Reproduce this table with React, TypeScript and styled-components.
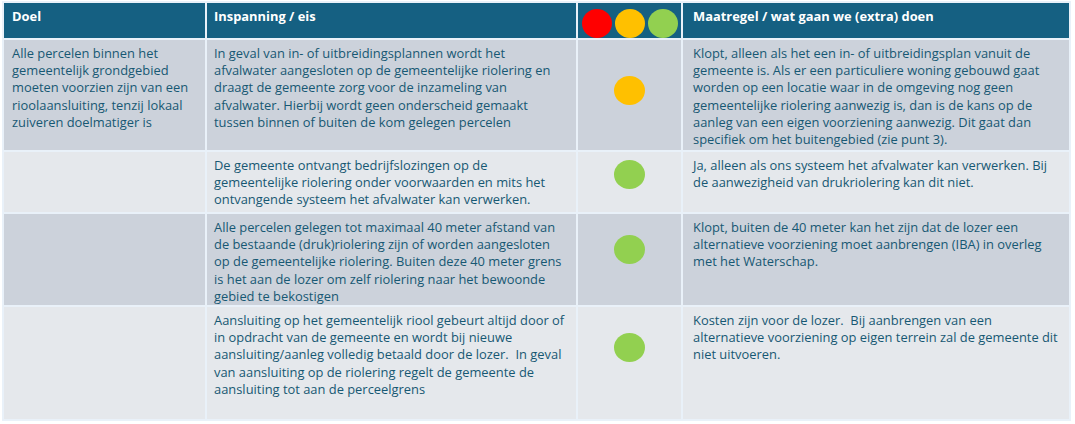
import styled, { createGlobalStyle } from 'styled-components';

const GlobalStyle = createGlobalStyle`
    body {
        margin: 0;
        background: #ffffff;
        font-family: "Open Sans", "Liberation Sans", sans-serif;
    }
`;

const Table = styled.div`
    display: grid;
    grid-template-columns: 201px 369px 103px 386px;
    grid-template-rows: 35px 110px 60px 91px 112px;
    gap: 2px;
    padding: 2px;
    margin: 1px 0 0 2px;
    width: max-content;
    background: #e9f1f9;
`;

const HeadCell = styled.div<{ $pad?: number }>`
    background: #156082;
    color: #ffffff;
    font-weight: 700;
    font-size: 12.9px;
    line-height: 17px;
    padding: 5px ${(p) => p.$pad ?? 8}px 0;
    white-space: nowrap;
`;

const Lights = styled.div`
    background: #156082;
    display: flex;
    justify-content: center;
    gap: 3px;
    padding-top: 6px;
    padding-left: 1px;
`;

const Light = styled.span<{ $color: string }>`
    width: 30px;
    height: 29px;
    border-radius: 50%;
    background: ${(p) => p.$color};
`;

const Cell = styled.div<{ $shade: boolean; $pad?: number }>`
    background: ${(p) => (p.$shade ? '#ccd2db' : '#e5e8ec')};
    color: #175873;
    font-size: 12.9px;
    line-height: 17.2px;
    padding: 5px ${(p) => p.$pad ?? 8}px 0;
    white-space: nowrap;
`;

const DotCell = styled.div<{ $shade: boolean; $top: number }>`
    background: ${(p) => (p.$shade ? '#ccd2db' : '#e5e8ec')};
    display: flex;
    justify-content: center;
    align-items: flex-start;
    padding-top: ${(p) => p.$top}px;
`;

const Dot = styled.span<{ $color: string }>`
    width: 31px;
    height: 29px;
    border-radius: 50%;
    background: ${(p) => p.$color};
`;

const AMBER = '#ffc000';
const GREEN = '#92d050';

type Row = {
    doel: string[];
    eis: string[];
    dot: string;
    top: number;
    maatregel: string[];
};

const rows: Row[] = [
    {
        doel: [
            'Alle percelen binnen het',
            'gemeentelijk grondgebied',
            'moeten voorzien zijn van een',
            'rioolaansluiting, tenzij lokaal',
            'zuiveren doelmatiger is',
        ],
        eis: [
            'In geval van in- of uitbreidingsplannen wordt het',
            'afvalwater aangesloten op de gemeentelijke riolering en',
            'draagt de gemeente zorg voor de inzameling van',
            'afvalwater. Hierbij wordt geen onderscheid gemaakt',
            'tussen binnen of buiten de kom gelegen percelen',
        ],
        dot: AMBER,
        top: 36,
        maatregel: [
            'Klopt, alleen als het een in- of uitbreidingsplan vanuit de',
            'gemeente is. Als er een particuliere woning gebouwd gaat',
            'worden op een locatie waar in de omgeving nog geen',
            'gemeentelijke riolering aanwezig is, dan is de kans op de',
            'aanleg van een eigen voorziening aanwezig. Dit gaat dan',
            'specifiek om het buitengebied (zie punt 3).',
        ],
    },
    {
        doel: [],
        eis: [
            'De gemeente ontvangt bedrijfslozingen op de',
            'gemeentelijke riolering onder voorwaarden en mits het',
            'ontvangende systeem het afvalwater kan verwerken.',
        ],
        dot: GREEN,
        top: 8,
        maatregel: [
            'Ja, alleen als ons systeem het afvalwater kan verwerken. Bij',
            'de aanwezigheid van drukriolering kan dit niet.',
        ],
    },
    {
        doel: [],
        eis: [
            'Alle percelen gelegen tot maximaal 40 meter afstand van',
            'de bestaande (druk)riolering zijn of worden aangesloten',
            'op de gemeentelijke riolering. Buiten deze 40 meter grens',
            'is het aan de lozer om zelf riolering naar het bewoonde',
            'gebied te bekostigen',
        ],
        dot: GREEN,
        top: 21,
        maatregel: [
            'Klopt, buiten de 40 meter kan het zijn dat de lozer een',
            'alternatieve voorziening moet aanbrengen (IBA) in overleg',
            'met het Waterschap.',
        ],
    },
    {
        doel: [],
        eis: [
            'Aansluiting op het gemeentelijk riool gebeurt altijd door of',
            'in opdracht van de gemeente en wordt bij nieuwe',
            'aansluiting/aanleg volledig betaald door de lozer.\u00a0 In geval',
            'van aansluiting op de riolering regelt de gemeente de',
            'aansluiting tot aan de perceelgrens',
        ],
        dot: GREEN,
        top: 26,
        maatregel: [
            'Kosten zijn voor de lozer.\u00a0 Bij aanbrengen van een',
            'alternatieve voorziening op eigen terrein zal de gemeente dit',
            'niet uitvoeren.',
        ],
    },
];

const Lines = ({ lines }: { lines: string[] }) => (
    <>
        {lines.map((l, i) => (
            <div key={i}>{l}</div>
        ))}
    </>
);

export default function App() {
    return (
        <>
            <GlobalStyle />
            <Table>
                <HeadCell>Doel</HeadCell>
                <HeadCell $pad={7}>Inspanning / eis</HeadCell>
                <Lights>
                    <Light $color="#ff0000" />
                    <Light $color={AMBER} />
                    <Light $color={GREEN} />
                </Lights>
                <HeadCell $pad={10}>Maatregel / wat gaan we (extra) doen</HeadCell>
                {rows.map((r, i) => {
                    const shade = i % 2 === 0;
                    return [
                        <Cell key={`d${i}`} $shade={shade}>
                            <Lines lines={r.doel} />
                        </Cell>,
                        <Cell key={`e${i}`} $shade={shade} $pad={7}>
                            <Lines lines={r.eis} />
                        </Cell>,
                        <DotCell key={`c${i}`} $shade={shade} $top={r.top}>
                            <Dot $color={r.dot} />
                        </DotCell>,
                        <Cell key={`m${i}`} $shade={shade} $pad={10}>
                            <Lines lines={r.maatregel} />
                        </Cell>,
                    ];
                })}
            </Table>
        </>
    );
}
